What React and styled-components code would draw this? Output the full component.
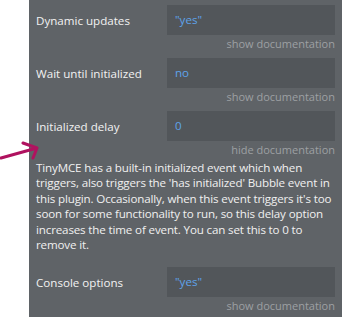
import React from 'react';
import styled, { createGlobalStyle } from 'styled-components';

const GlobalStyle = createGlobalStyle`
  body {
    margin: 0;
    background: #fff;
    font-family: "Open Sans", "Noto Sans", sans-serif;
  }
`;

const fields = [
  { label: 'Dynamic updates', value: '"yes"', open: false },
  { label: 'Wait until initialized', value: 'no', open: false },
  {
    label: 'Initialized delay',
    value: '0',
    open: true,
    doc: "TinyMCE has a built-in initialized event which when triggers, also triggers the 'has initialized' Bubble event in this plugin. Occasionally, when this event triggers it's too soon for some functionality to run, so this delay option increases the time of event. You can set this to 0 to remove it.",
  },
  { label: 'Console options', value: '"yes"', open: false },
];

const App = () => {
  return (
    <>
      <GlobalStyle />
      <Page>
        <Gutter />
        <Panel>
          {fields.map((f) => (
            <Field key={f.label}>
              <Row>
                <Label>{f.label}</Label>
                <ValueBox>{f.value}</ValueBox>
              </Row>
              <DocLink>{f.open ? 'hide documentation' : 'show documentation'}</DocLink>
              {f.open && <DocText>{f.doc}</DocText>}
            </Field>
          ))}
        </Panel>
        <Arrow width="44" height="22" viewBox="0 0 44 22">
          <path
            d="M1 17 L37 7 M23 2 L37 7 L33 17"
            fill="none"
            stroke="#b0125f"
            strokeWidth="3"
            strokeLinecap="round"
            strokeLinejoin="round"
          />
        </Arrow>
      </Page>
    </>
  );
};

export default App;

const Page = styled.div`
  position: relative;
  display: flex;
  width: 342px;
  height: 317px;
  overflow: hidden;
`;

const Gutter = styled.div`
  width: 29px;
  flex-shrink: 0;
  background: #fff;
`;

const Panel = styled.div`
  flex: 1;
  background: #5f6367;
  padding: 0 7px;
`;

const Field = styled.div`
  padding-top: 5px;
`;

const Row = styled.div`
  display: flex;
  align-items: center;
  height: 30px;
`;

const Label = styled.div`
  width: 131px;
  color: #f2f2f2;
  font-size: 11.6px;
`;

const ValueBox = styled.div`
  flex: 1;
  height: 30px;
  line-height: 30px;
  background: #52565a;
  color: #5ea3ea;
  font-size: 11.6px;
  padding: 0 8px;
`;

const DocLink = styled.div`
  height: 18px;
  line-height: 18px;
  text-align: right;
  font-size: 11px;
  color: #9da0a3;
`;

const DocText = styled.p`
  margin: 1px 0 10px;
  color: #f0f0f0;
  font-size: 11.6px;
  letter-spacing: -0.15px;
  line-height: 15.4px;
`;

const Arrow = styled.svg`
  position: absolute;
  left: 0;
  top: 141px;
`;
